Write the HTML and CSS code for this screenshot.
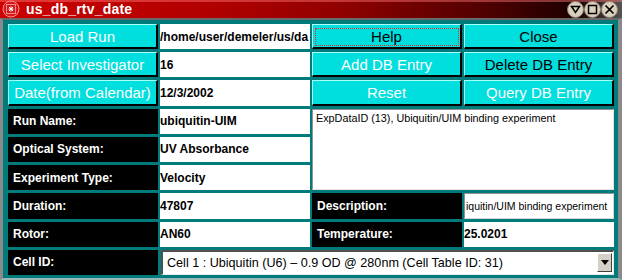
FILE: index.html
```html
<!DOCTYPE html>
<html>
<head>
<meta charset="utf-8">
<link rel="stylesheet" href="styles.css">
</head>
<body>
<div class="window">
  <div class="titlebar">
    <svg class="app-icon" width="18" height="18" viewBox="0 0 18 18">
      <circle cx="9" cy="9" r="8" fill="#d81818" stroke="#ff9090" stroke-width="1"/>
      <rect x="4.5" y="4.5" width="9" height="9" fill="none" stroke="#fff" stroke-width="1" stroke-dasharray="1 1"/>
      <path d="M7 7 L11 11 M11 7 L7 11 M9 6.5 V11.5 M6.5 9 H11.5" stroke="#fff" stroke-width="1"/>
    </svg>
    <span class="title">us_db_rtv_date</span>
    <div class="wm-buttons">
      <svg width="17" height="17" viewBox="0 0 17 17">
        <circle cx="8.5" cy="8.5" r="8" fill="#d8d0bc" stroke="#8a8270" stroke-width="1"/>
        <path d="M4.5 5.5 H12.5 L8.5 11.5 Z" fill="none" stroke="#000" stroke-width="1.5"/>
      </svg>
      <svg width="17" height="17" viewBox="0 0 17 17">
        <circle cx="8.5" cy="8.5" r="8" fill="#d8d0bc" stroke="#8a8270" stroke-width="1"/>
        <rect x="4.5" y="4.5" width="8" height="8" fill="none" stroke="#000" stroke-width="1.5"/>
      </svg>
      <svg width="17" height="17" viewBox="0 0 17 17">
        <circle cx="8.5" cy="8.5" r="8" fill="#d8d0bc" stroke="#8a8270" stroke-width="1"/>
        <path d="M4.5 4.5 L12.5 12.5 M12.5 4.5 L4.5 12.5" stroke="#000" stroke-width="1.7"/>
      </svg>
    </div>
  </div>
  <div class="frame">
    <div class="grid">
      <div class="btn light">Load Run</div>
      <div class="field value">/home/user/demeler/us/da</div>
      <div class="btn dark"><span class="focus">Help</span></div>
      <div class="btn dark">Close</div>

      <div class="btn light">Select Investigator</div>
      <div class="field value">16</div>
      <div class="btn light">Add DB Entry</div>
      <div class="btn dark">Delete DB Entry</div>

      <div class="btn light">Date(from Calendar)</div>
      <div class="field value">12/3/2002</div>
      <div class="btn light">Reset</div>
      <div class="btn light">Query DB Entry</div>

      <div class="label">Run Name:</div>
      <div class="field value">ubiquitin-UIM</div>
      <div class="textarea">ExpDataID (13), Ubiquitin/UIM binding experiment</div>

      <div class="label">Optical System:</div>
      <div class="field value">UV Absorbance</div>

      <div class="label">Experiment Type:</div>
      <div class="field value">Velocity</div>

      <div class="label">Duration:</div>
      <div class="field value">47807</div>
      <div class="label">Description:</div>
      <div class="lineedit">iquitin/UIM binding experiment</div>

      <div class="label">Rotor:</div>
      <div class="field value">AN60</div>
      <div class="label">Temperature:</div>
      <div class="field value">25.0201</div>

      <div class="label">Cell ID:</div>
      <div class="combo">
        <span class="combo-text">Cell 1 : Ubiquitin (U6) – 0.9 OD @ 280nm (Cell Table ID: 31)</span>
        <span class="combo-arrow">
          <svg width="8" height="5" viewBox="0 0 8 5"><path d="M0 0 H8 L4 5 Z" fill="#000"/></svg>
        </span>
      </div>
    </div>
  </div>
</div>
</body>
</html>
```

FILE: styles.css
```css
html, body {
  margin: 0;
  padding: 0;
  width: 622px;
  height: 280px;
  overflow: hidden;
  background: #007b7b;
  font-family: "Liberation Sans", Arial, sans-serif;
}

.window {
  width: 622px;
  height: 280px;
  display: flex;
  flex-direction: column;
}

.titlebar {
  height: 18px;
  display: flex;
  align-items: center;
  background: linear-gradient(to right, #cc0000 0%, #b00000 35%, #900000 55%, #4a0000 80%, #1a0000 93%, #555 100%);
  position: relative;
}

.titlebar::after {
  content: "";
  position: absolute;
  left: 0; right: 0; top: 0;
  height: 2px;
  background: rgba(255, 120, 120, 0.45);
}

.app-icon {
  margin-left: 2px;
  flex: none;
}

.title {
  margin-left: 6px;
  color: #fff;
  font-weight: bold;
  font-size: 14px;
  letter-spacing: 0.2px;
}

.wm-buttons {
  margin-left: auto;
  margin-right: 4px;
  display: flex;
  padding-top: 1px;
}

.wm-buttons svg {
  display: block;
}

.frame {
  flex: 1;
  border-left: 3px solid #8a8a8a;
  border-right: 4px solid #8a8a8a;
  border-top: 2px solid #6a6a6a;
  border-bottom: 2px solid #9ab8b8;
  padding: 4px 4px 3px 5px;
  background: #007b7b;
}

.grid {
  display: grid;
  grid-template-columns: repeat(4, 1fr);
  grid-template-rows: repeat(9, 1fr);
  column-gap: 2px;
  row-gap: 3px;
  height: 251px;
}

.btn {
  background: #00dede;
  border-top: 1px solid #a8ffff;
  border-left: 1px solid #a8ffff;
  border-right: 2px solid #000;
  border-bottom: 2px solid #000;
  display: flex;
  align-items: center;
  justify-content: center;
  font-size: 15px;
  white-space: nowrap;
  overflow: hidden;
  position: relative;
}

.btn.light {
  color: #fff;
}

.btn.dark {
  color: #000;
}

.focus::before {
  content: "";
  position: absolute;
  left: 2px; top: 3px; right: 1px; bottom: 1px;
  border: 1px dotted #ff2020;
}

.field {
  background: #fff;
  display: flex;
  align-items: center;
  overflow: hidden;
  white-space: nowrap;
}

.value {
  font-weight: bold;
  font-size: 12px;
  color: #000;
}

.label {
  background: #000;
  color: #fff;
  font-weight: bold;
  font-size: 12px;
  display: flex;
  align-items: center;
  padding-left: 5px;
  white-space: nowrap;
}

.textarea {
  grid-column: 3 / 5;
  grid-row: 4 / 7;
  background: #fff;
  border-top: 1px solid #909090;
  border-left: 1px solid #909090;
  border-right: 1px solid #e4e4e4;
  border-bottom: 1px solid #e4e4e4;
  font-size: 10.8px;
  padding: 2px 3px;
  color: #000;
}

.lineedit {
  background: #fff;
  border-top: 1px solid #909090;
  border-left: 1px solid #909090;
  border-right: 1px solid #d8d8d8;
  border-bottom: 1px solid #d8d8d8;
  display: flex;
  align-items: center;
  overflow: hidden;
  white-space: nowrap;
  font-size: 10.5px;
  padding-left: 1px;
}

.combo {
  grid-column: 2 / 5;
  margin-left: 1px;
  background: #fff;
  border-top: 2px solid #505050;
  border-left: 2px solid #505050;
  border-right: 1px solid #e8e8e8;
  border-bottom: 1px solid #e8e8e8;
  display: flex;
  align-items: center;
  padding-left: 4px;
  padding-right: 1px;
  font-size: 12.6px;
  white-space: nowrap;
}

.combo-text {
  flex: 1;
  overflow: hidden;
}

.combo-arrow {
  width: 13px;
  height: 17px;
  background: #d4d0c8;
  border-top: 1px solid #fff;
  border-left: 1px solid #fff;
  border-right: 1px solid #404040;
  border-bottom: 1px solid #404040;
  display: flex;
  align-items: center;
  justify-content: center;
  flex: none;
}

.combo-arrow svg {
  display: block;
}
```
